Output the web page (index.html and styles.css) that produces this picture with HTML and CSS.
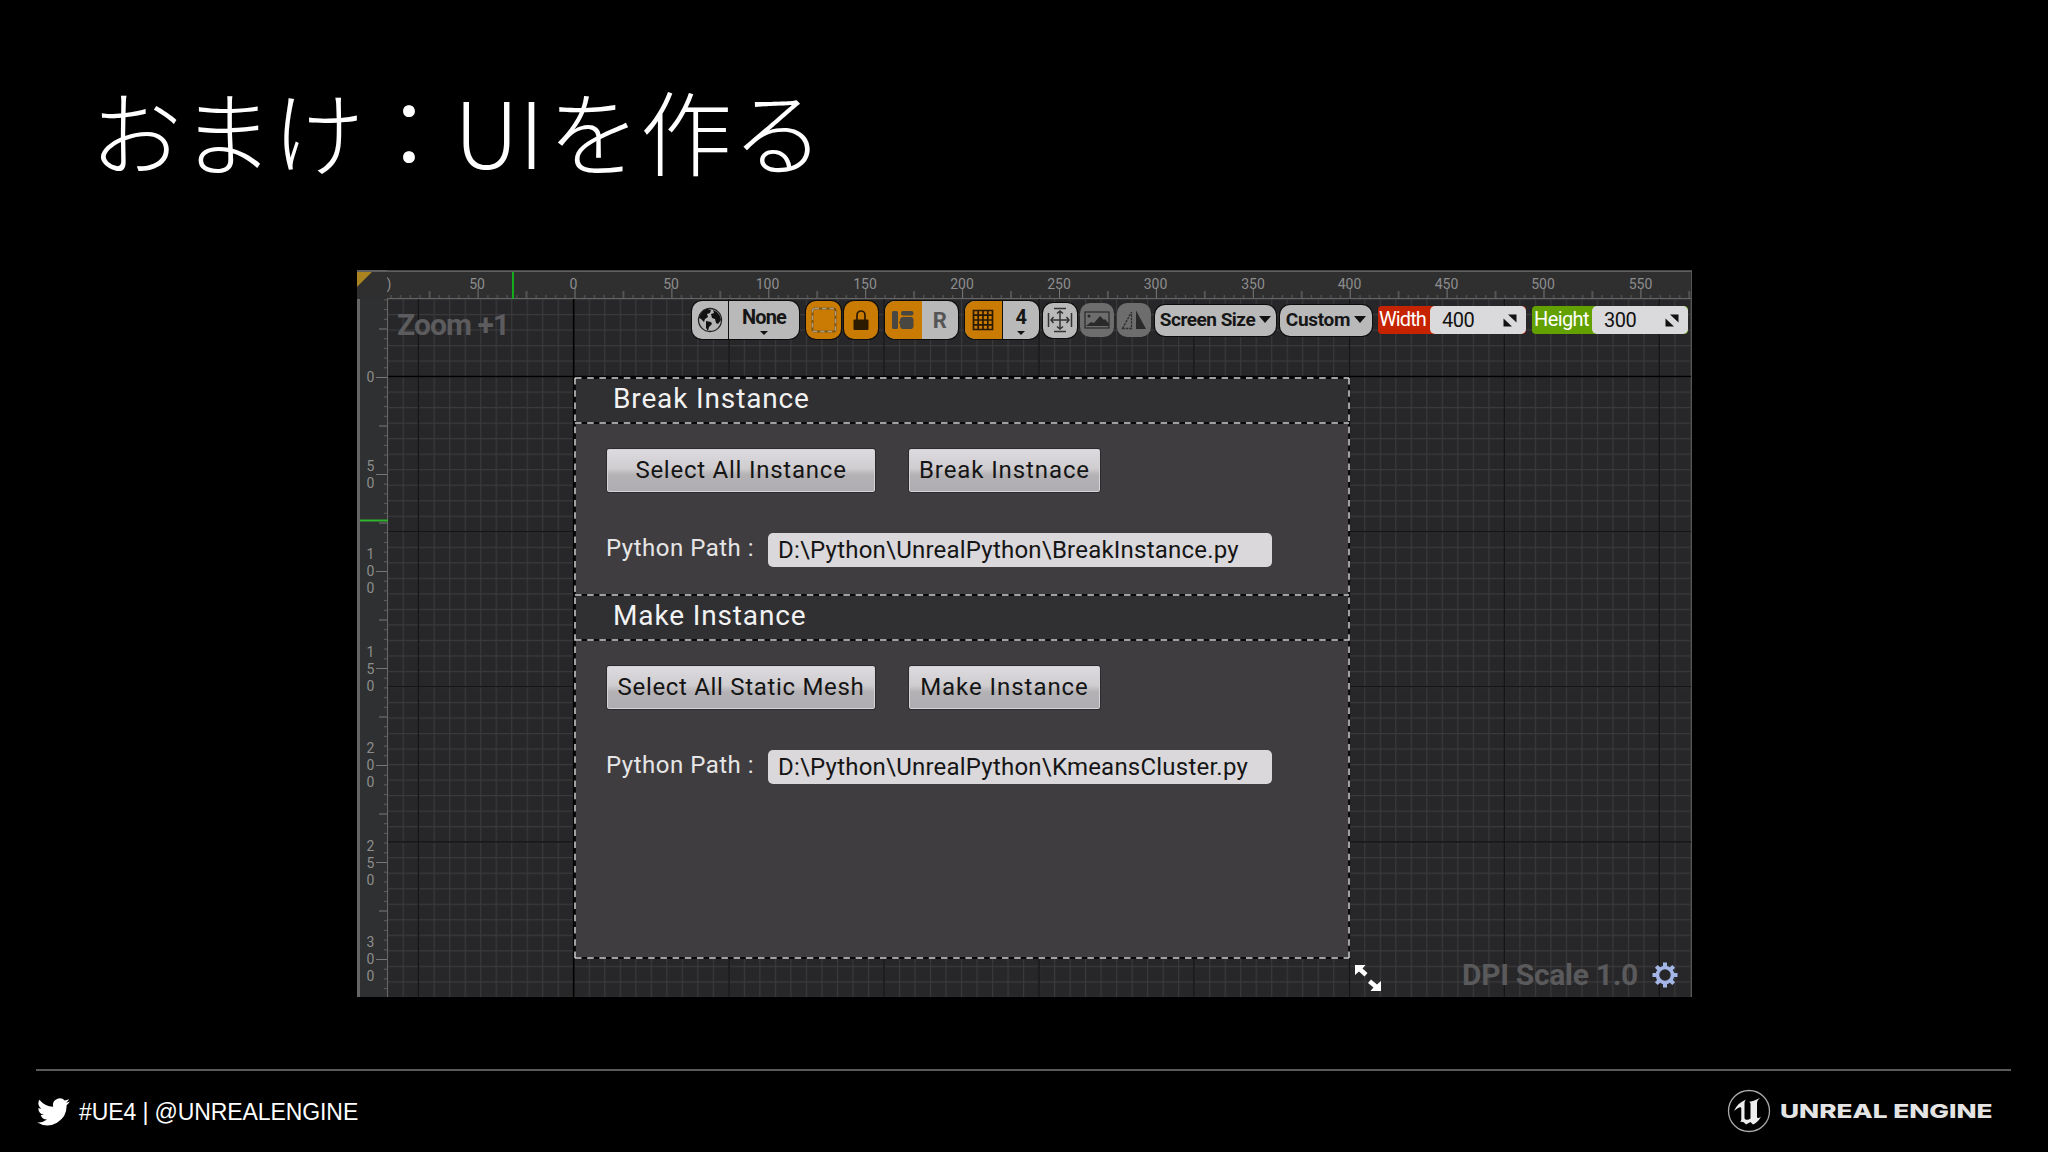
FILE: index.html
```html
<!DOCTYPE html>
<html lang="ja">
<head>
<meta charset="utf-8">
<title>おまけ：UIを作る</title>
<link rel="stylesheet" href="styles.css">
</head>
<body>
<main class="slide">
  <h1 class="title"><span class="lead">おまけ：</span><span class="latin">UI</span>を作る</h1>

  <section class="designer">
    <div class="corner"></div>
    <svg class="ruler-top" width="1304" height="29" viewBox="387 270 1304 29">
      <defs>
        <pattern id="tx" x="574.5" y="270" width="96.9" height="29" patternUnits="userSpaceOnUse">
          <path d="M.5 18v11M48.9 21v8" stroke="#777"/>
          <path d="M10.2 25v4M19.9 25v4M29.6 25v4M39.2 25v4M58.6 25v4M68.3 25v4M78 25v4M87.7 25v4" stroke="#5c5c5c"/>
        </pattern>
      </defs>
      <rect x="387" y="270" width="1304" height="29" fill="#2f2f30"/>
      <rect x="387" y="270" width="1304" height="29" fill="url(#tx)"/>
      <path d="M387 271.2h1304" stroke="#5f5f60" stroke-width="1.6"/>
      <path d="M387 298.6h1304" stroke="#666" stroke-width="1.4"/>
      <g class="ticks" text-anchor="middle">
        <text x="389" y="289">)</text><text x="477" y="289">50</text><text x="573.5" y="289">0</text><text x="671" y="289">50</text><text x="767.5" y="289">100</text><text x="865" y="289">150</text><text x="962" y="289">200</text><text x="1059" y="289">250</text><text x="1155.5" y="289">300</text><text x="1253" y="289">350</text><text x="1349.5" y="289">400</text><text x="1446.5" y="289">450</text><text x="1543" y="289">500</text><text x="1640.5" y="289">550</text>
      </g>
      <path d="M513 272v28" stroke="#14b81c" stroke-width="1.8"/>
    </svg>
    <svg class="ruler-left" width="31" height="698" viewBox="357 299 31 698">
      <defs>
        <pattern id="ty" x="357" y="377" width="31" height="97" patternUnits="userSpaceOnUse">
          <path d="M19 .5h12M22 49h9" stroke="#777"/>
          <path d="M27 10.2h4M27 19.9h4M27 29.6h4M27 39.3h4M27 58.7h4M27 68.4h4M27 78.1h4M27 87.8h4" stroke="#5c5c5c"/>
        </pattern>
      </defs>
      <rect x="357" y="299" width="31" height="698" fill="#2f3031"/>
      <rect x="357" y="299" width="31" height="698" fill="url(#ty)"/>
      <path d="M358.5 299v698" stroke="#666" stroke-width="3"/>
      <path d="M387.5 299v698" stroke="#666"/>
      <g class="ticks" text-anchor="middle">
        <text x="370.5" y="382">0</text>
        <text x="370.5" y="470.5">5</text><text x="370.5" y="487.5">0</text>
        <text x="370.5" y="559">1</text><text x="370.5" y="576">0</text><text x="370.5" y="593">0</text>
        <text x="370.5" y="657">1</text><text x="370.5" y="674">5</text><text x="370.5" y="691">0</text>
        <text x="370.5" y="753">2</text><text x="370.5" y="770">0</text><text x="370.5" y="787">0</text>
        <text x="370.5" y="851">2</text><text x="370.5" y="868">5</text><text x="370.5" y="885">0</text>
        <text x="370.5" y="947">3</text><text x="370.5" y="964">0</text><text x="370.5" y="981">0</text>
      </g>
      <path d="M360 520.5h28" stroke="#30b52f" stroke-width="2"/>
    </svg>

    <div class="viewport">
      <svg class="grid" width="1303" height="698" viewBox="388 299 1303 698">
        <defs>
          <pattern id="minor" x="573.2" y="376" width="15.51" height="15.52" patternUnits="userSpaceOnUse">
            <path d="M.6 0V16M0 .6H16" stroke="#3a3a3c" stroke-width="1.1"/>
          </pattern>
        </defs>
        <rect x="388" y="299" width="1303" height="698" fill="#272628"/>
        <rect x="388" y="299" width="1303" height="698" fill="url(#minor)"/>
        <path d="M418.5 299v698M729 299v698M884 299v698M1039 299v698M1194 299v698M1349.5 299v698M1504.3 299v698M1659.3 299v698M388 531.7h1303M388 686.7h1303M388 842h1303" stroke="#151416" stroke-width="1.3"/>
        <path d="M573.7 299v698M388 376.5h1303" stroke="#000" stroke-width="1.6"/>
      </svg>

      <div class="toolbar">
        <div class="pill group b0">
          <span class="cell globe"><svg width="26" height="26" viewBox="0 0 26 26"><circle cx="13" cy="13" r="11.5" fill="#b5b5b5" stroke="#222" stroke-width="1.3"/><path d="M3 8 6 4l4-2 4 1-1 3-3 1 1 3-3 2-1 3-3-3-2-1zM9 14l5 1 1 2-3 3-1 4-2-3zM16 3l4 2 3 4 1 4-3 4-2-1-1-4-3-1-1-4 3-1z" fill="#111"/></svg></span>
          <span class="cell drop"><b>None</b><i></i></span>
        </div>
        <div class="pill on b1"><svg width="26" height="26" viewBox="0 0 26 26"><rect x="1.5" y="1.5" width="23" height="23" rx="2" fill="none" stroke="#7c5412" stroke-width="2"/><rect x="1.5" y="1.5" width="23" height="23" rx="2" fill="none" stroke="#a79c86" stroke-width="1.4" stroke-dasharray="4.5 3"/></svg></div>
        <div class="pill on b2"><svg width="18" height="22" viewBox="0 0 18 22"><path d="M5 11V6a4 4 0 0 1 8 0v5" fill="none" stroke="#2c1b00" stroke-width="1.7"/><rect x="1.5" y="10.5" width="15" height="10.5" rx="1" fill="#2c1b00"/></svg></div>
        <div class="pill group b3">
          <span class="cell on"><svg width="24" height="20" viewBox="0 0 24 20"><g fill="#494742"><rect x="1" y="1" width="6" height="18" rx="1.5"/><rect x="10" y="1" width="12.5" height="4.5" rx="2"/><path d="M11 7h10l1.500 2v8L21 19H11l-2-2v-3.500h-1v-2h1V9z"/></g></svg></span>
          <span class="cell"><em>R</em></span>
        </div>
        <div class="pill group b4">
          <span class="cell on line"><svg width="22" height="22" viewBox="0 0 22 22"><path d="M1.500 1.500h19v19h-19zM6.200 1v20M11 1v20M15.800 1v20M1 6.200h20M1 11h20M1 15.800h20" fill="none" stroke="#2a1a02" stroke-width="1.7"/></svg></span>
          <span class="cell drop four"><b>4</b><i></i></span>
        </div>
        <div class="pill b5"><svg width="26" height="26" viewBox="0 0 26 26"><path d="M7 1.500h12M7 24.500h12M1.500 6v14M24.500 6v14M13 4v18M4 13h18M10 6.500 13 4l3 2.500M10 19.500l3 2.500 3-2.500M6.500 10 4 13l2.500 3M19.500 10l2.500 3-2.500 3" fill="none" stroke="#333" stroke-width="1.5"/></svg></div>
        <div class="pill off b6"><svg width="26" height="18" viewBox="0 0 26 18"><rect x="1" y="1" width="24" height="16" fill="none" stroke="#2f2f2f" stroke-width="1.3"/><path d="M2 15l5-4 3 1 6-7 4 4 1-1 4 5v2H2z" fill="#2a2a2a"/><circle cx="5" cy="5" r="1.5" fill="#2a2a2a"/></svg></div>
        <div class="pill off b7"><svg width="26" height="20" viewBox="0 0 26 20"><path d="M1.500 18.500 10.500 2v16.500z" fill="none" stroke="#2f2f2f" stroke-width="1.3" stroke-dasharray="2.5 1"/><path d="M15 .5 25 19H15z" fill="#2a2a2a"/></svg></div>
        <div class="pill menu b8"><span class="t-ss">Screen Size</span><i></i></div>
        <div class="pill menu b9"><span class="t-cu">Custom</span><i></i></div>
        <div class="field red"><label>Width</label><div class="num"><span>400</span><svg width="14" height="13" viewBox="0 0 14 13"><path d="M5 .5h8.500v8zM.5 4.500v8H9z" fill="#111"/></svg></div></div>
        <div class="field green"><label>Height</label><div class="num"><span>300</span><svg width="14" height="13" viewBox="0 0 14 13"><path d="M5 .5h8.500v8zM.5 4.500v8H9z" fill="#111"/></svg></div></div>
      </div>
      <div class="zoom">Zoom +1</div>

      <div class="widget">
        <svg class="dashes" width="776" height="582" viewBox="574 377 776 582">
          <path d="M575 378H1349V958H575ZM575 423H1349M575 595H1349M575 640H1349" fill="none" stroke="#09090a" stroke-width="1.8"/>
          <path d="M575 378H1349M575 423H1349M575 595H1349M575 640H1349M575 958H1349M575 378V958M1349 378V958" fill="none" stroke="#d2d2d2" stroke-width="1.5" stroke-dasharray="6.5 5.7"/>
        </svg>
        <h2>Break Instance</h2>
        <div class="body">
          <div class="row"><button class="wide t-sai">Select All Instance</button><button class="narrow t-bin">Break Instnace</button></div>
          <div class="row path"><span class="lab">Python Path :</span><div class="box">D:\Python\UnrealPython\BreakInstance.py</div></div>
        </div>
        <h2>Make Instance</h2>
        <div class="body">
          <div class="row"><button class="wide t-sas">Select All Static Mesh</button><button class="narrow t-min">Make Instance</button></div>
          <div class="row path"><span class="lab">Python Path :</span><div class="box">D:\Python\UnrealPython\KmeansCluster.py</div></div>
        </div>
      </div>

      <svg class="resize" width="28" height="28" viewBox="0 0 28 28"><path d="M1 1h10.500L8.500 4.500l5 4.500-3 3.500-5.500-5L1 11zM27 27H16.500l3-3.500-5.500-4.500 3-3.500 6 5 4-3.500z" fill="#fff"/></svg>
      <div class="dpi"><span>DPI Scale 1.0</span>
        <svg width="26" height="26" viewBox="-13 -13 26 26"><circle r="7.5" fill="none" stroke="#a3b6e6" stroke-width="3.6"/><path d="M0-12.500V-8M0 8v4.500M-12.500 0H-8M8 0h4.500M-8.700-8.700-6-6M6 6l2.700 2.700M-8.700 8.700-6 6M6-6l2.700-2.700" stroke="#a3b6e6" stroke-width="4"/></svg>
      </div>
    </div>
  </section>

  <footer>
    <div class="social">
      <svg width="33" height="28" viewBox="0 0 24 20"><path d="M23.900 2.400a10 10 0 0 1-2.800.8A5 5 0 0 0 23.300.5a10 10 0 0 1-3.100 1.200 4.900 4.900 0 0 0-8.400 4.500A14 14 0 0 1 1.700 1.100a4.900 4.900 0 0 0 1.500 6.600 5 5 0 0 1-2.200-.6 4.900 4.900 0 0 0 3.900 4.900 5 5 0 0 1-2.200.1 4.900 4.900 0 0 0 4.600 3.400A9.900 9.900 0 0 1 0 17.500 14 14 0 0 0 21.500 5a10 10 0 0 0 2.400-2.600z" fill="#fff"/></svg>
      <span>#UE4 | @UNREALENGINE</span>
    </div>
    <div class="brand">
      <svg width="44" height="44" viewBox="0 0 44 44"><circle cx="22" cy="22" r="20.5" fill="none" stroke="#aaa" stroke-width="1.3"/><path d="M7 22c2-5 6-9 12-11.500-1.200 1.300-1.500 2.500-1.500 4.500v14c0 2 3.500 2.500 6 .5V15c0-1.500-.8-2-2-2 3-.5 7-1.500 11.500-4-2.500 2-3 3.500-3 6v13c0 1.500 1.500 1.500 4-.5-2 4.500-5.500 7-8 8l-2.500-2.500L19 35.500c-2-2.500-4-3-6-2.500 1-.8 1.300-1.800 1.300-3.500V19.500c0-2.500-3-1.500-7.300 2.500z" fill="#eee"/></svg>
      <span class="wordbox"><span class="wordmark">UNREAL ENGINE</span></span>
    </div>
  </footer>
</main>
</body>
</html>
```
FILE: styles.css
```css
* { box-sizing: border-box; }
body { margin: 0; background: #000; font-family: Roboto, "Liberation Sans", sans-serif; }
.slide { width: 2048px; height: 1152px; background: #000; display: flex; flex-direction: column; overflow: hidden; }
.title { margin: 0; height: 270px; padding: 62px 0 0 90px; font: 300 92px/133px "Noto Sans CJK JP", sans-serif; color: #fff; white-space: nowrap; }
.lead { letter-spacing: -1px; }
.latin { margin-right: 4px; }
.title, .designer, footer { flex: none; }

.designer { width: 1335px; height: 727px; margin-left: 357px; display: grid; grid-template-columns: 30px 1px 1fr; grid-template-rows: 29px 1fr; border-right: 1px solid #555; }
.corner { grid-area: 1 / 1; background: linear-gradient(135deg, #a98420 0 10px, transparent 11px), #2f2f30; border-top: 2px solid #5f5f60; }
.ruler-top { grid-area: 1 / 2 / 2 / 4; display: block; }
.ruler-left { grid-area: 2 / 1 / 3 / 3; display: block; }
.ticks { font: 14px Roboto, sans-serif; fill: #8d8d8d; }
.viewport { grid-area: 2 / 3; position: relative; }
.grid { position: absolute; left: 0; top: 0; }

.toolbar { position: relative; display: flex; align-items: center; height: 42px; padding-left: 304px; }
.pill { height: 38px; border-radius: 10px; background: #b9b9ba; box-shadow: 0 0 0 1px #0c0c0c; display: flex; align-items: center; justify-content: center; flex: none; overflow: hidden; color: #161616; }
.pill.on, .cell.on { background: #c97b04; }
.pill.off { background: #6d6d6e; box-shadow: none; height: 34px; }
.cell { height: 100%; display: flex; align-items: center; justify-content: center; flex: 1; }
.cell em { font: 700 22px Roboto, sans-serif; color: #555; }
.globe { flex: 0 0 37px; border-right: 1px solid #111; }
.line { border-right: 1px solid #111; }
.drop { flex-direction: column; }
.drop b { font: 700 20px/22px Roboto, sans-serif; letter-spacing: -.8px; }
.drop i { border: 4px solid transparent; border-top-color: #111; border-bottom: 0; margin-top: 3px; }
.b0 { width: 107px; }
.b1 { width: 35px; margin-left: 7px; }
.b2 { width: 34px; margin-left: 3px; }
.b3 { width: 73px; margin-left: 7px; }
.b4 { width: 74px; margin-left: 7px; }
.b5 { width: 34px; height: 35px; margin-left: 4px; }
.b6 { width: 34px; margin-left: 3px; }
.b7 { width: 34px; margin-left: 3px; }
.b8 { width: 121px; margin-left: 4px; }
.b9 { width: 92px; margin-left: 4px; }
.menu { height: 31px; font: 700 19px/29px Roboto, sans-serif; gap: 4px; padding-bottom: 1px; }
.t-ss { letter-spacing: -.5px; }
.t-cu { letter-spacing: -.3px; }
.menu i { border: 6px solid transparent; border-top: 7px solid #111; border-bottom: 0; }
.field { display: flex; height: 28px; border-radius: 4px; font-size: 20px; color: #fff; flex: none; width: 148px; }
.field.red { margin-left: 6px; background: #c62300; }
.field.green { margin-left: 6px; background: #62a100; width: 156px; }
.field label { width: 52px; padding-left: 1px; line-height: 27px; letter-spacing: -.9px; }
.field.green label { width: 60px; padding-left: 2px; letter-spacing: -.6px; }
.num { flex: 1; background: #dad9db; border-radius: 5px; display: flex; align-items: center; justify-content: space-between; color: #111; padding: 0 9px 0 12px; letter-spacing: -.5px; }

.zoom { position: absolute; left: 9px; top: 8px; font: 700 30px/35px Roboto, sans-serif; letter-spacing: -.95px; color: #5c5c5e; }
.widget { position: relative; width: 774px; height: 580px; margin: 37px 0 0 187px; background: #3f3d40; }
.dashes { position: absolute; left: -1px; top: -1px; }
.widget h2 { margin: 0; height: 45px; padding-left: 38px; background: #302f32; font: 400 28px/42px Roboto, sans-serif; letter-spacing: .86px; color: #f2f2f2; }
.body { height: 172px; padding: 25px 0 0 31px; color: #e6e6e6; font-size: 24px; }
.row { display: flex; gap: 32px; }
.row.path { gap: 0; margin-top: 39px; align-items: center; height: 35px; }
.lab { width: 162px; padding-bottom: 4px; letter-spacing: .5px; }
button { height: 45px; padding: 0 0 2px; font: 400 24px Roboto, sans-serif; color: #151515; border: 1px solid #2b2a2c; border-radius: 3px; background: linear-gradient(#dddbdf, #cfcdd0 45%, #b4b2b5 60%, #aeacb0); box-shadow: inset 0 0 0 1px #d6d4d8; white-space: nowrap; }
.wide { width: 270px; }
.narrow { width: 193px; }
.t-sai { letter-spacing: .76px; }
.t-bin { letter-spacing: .9px; }
.t-sas { letter-spacing: .68px; }
.t-min { letter-spacing: .95px; }
.box { width: 504px; height: 34px; border-radius: 5px; background: #dad8db; color: #151515; padding-left: 10px; line-height: 34px; letter-spacing: .22px; white-space: nowrap; }
.resize { position: absolute; left: 966px; top: 665px; }
.dpi { position: absolute; right: 13px; top: 658px; display: flex; align-items: center; gap: 14px; font: 700 30px/36px Roboto, sans-serif; letter-spacing: -.3px; color: #5a5a5c; }

footer { display: flex; justify-content: space-between; align-items: flex-start; margin: 72px 37px 0 36px; border-top: 2px solid #5a5a5a; }
.social { display: flex; align-items: center; gap: 9px; padding: 26px 0 0 1px; font: 23px/28px "Liberation Sans", sans-serif; letter-spacing: -.1px; color: #fff; }
.social span { padding-top: 1px; }
.brand { display: flex; align-items: center; gap: 9px; padding: 18px 19px 0 0; }
.wordbox { width: 212px; padding-top: 2px; }
.wordmark { display: inline-block; font: 800 19px/24px Inter, sans-serif; color: #e4e4e4; transform-origin: 0 50%; transform: scaleX(1.38); white-space: nowrap; }
```
